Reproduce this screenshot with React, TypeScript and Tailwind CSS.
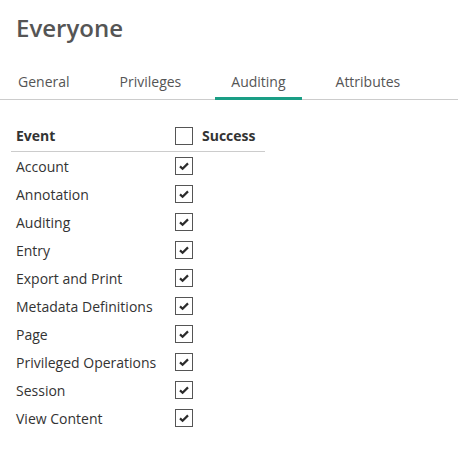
import React from "react";

const tabs = ["General", "Privileges", "Auditing", "Attributes"];

const events = [
  "Account",
  "Annotation",
  "Auditing",
  "Entry",
  "Export and Print",
  "Metadata Definitions",
  "Page",
  "Privileged Operations",
  "Session",
  "View Content",
];

const Check = ({ checked }: { checked: boolean }) => (
  <span className="flex items-center justify-center w-[18px] h-[18px] border border-[#555] bg-white">
    {checked && (
      <svg width="12" height="10" viewBox="0 0 12 10">
        <path d="M2 5.4 L4.6 7.8 L10 2.4" fill="none" stroke="#2b2b2b" strokeWidth="2.2" />
      </svg>
    )}
  </span>
);

const App = () => {
  return (
    <div className="w-[458px] h-[474px] bg-white font-['Open_Sans',sans-serif]">
      <h1 className="pl-4 pt-[12px] text-[24px] leading-[32px] font-semibold text-[#555]">
        Everyone
      </h1>
      <div className="mt-[28px] flex border-b border-[#ccc] pl-[2px] gap-[18px]">
        {tabs.map((t) => (
          <div
            key={t}
            className={
              t === "Auditing"
                ? "px-4 pb-[4px] text-[14px] leading-[20px] text-[#555] border-b-[3px] border-[#1a9e85] -mb-px"
                : "px-4 pb-[7px] text-[14px] leading-[20px] text-[#555]"
            }
          >
            {t}
          </div>
        ))}
      </div>
      <div className="ml-[11px] mt-[19px] w-[254px] text-[14px] text-[#333]">
        <div className="flex items-center h-[33px] border-b border-[#ccc] pt-[1px]">
          <div className="w-[164px] pl-[5px] font-bold">Event</div>
          <Check checked={false} />
          <div className="ml-[9px] font-bold">Success</div>
        </div>
        {events.map((e) => (
          <div key={e} className="flex items-center h-[28px]">
            <div className="w-[164px] pl-[5px]">{e}</div>
            <Check checked={true} />
          </div>
        ))}
      </div>
    </div>
  );
};

export default App;
